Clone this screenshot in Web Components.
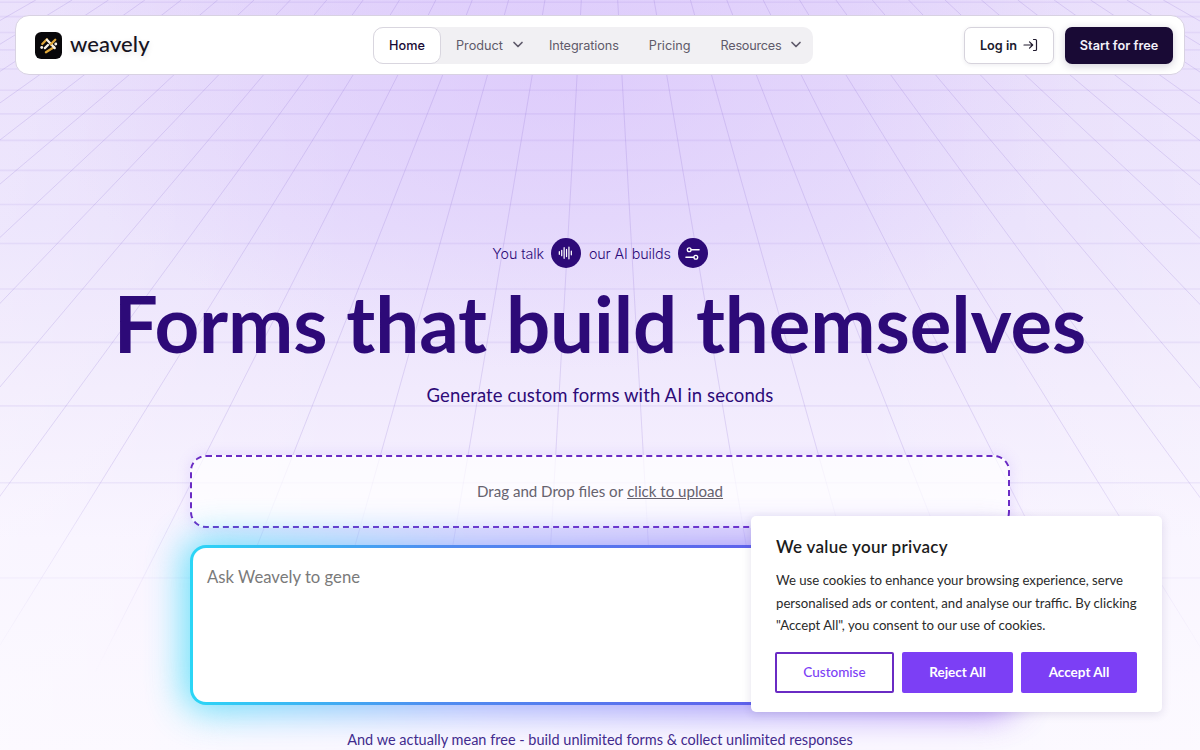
<!DOCTYPE html>
<html lang="en">
<head>
<meta charset="utf-8">
<title>Weavely</title>
<style>
  html, body { margin: 0; height: 750px; overflow: hidden; }
  body { font-family: "Lato", "Liberation Sans", sans-serif; background: #fbf8ff; }
</style>
</head>
<body>
<grid-bg></grid-bg>
<landing-page>
  <site-nav></site-nav>
  <hero-block></hero-block>
</landing-page>
<cookie-card></cookie-card>

<script>
function shadow(el, html) {
  el.attachShadow({ mode: "open" }).innerHTML = html;
}

// perspective floor behind everything
class GridBg extends HTMLElement {
  connectedCallback() {
    const vy = -323;
    const spread = 0.1126;
    let lines = "";
    for (let k = -16; k < 16; k++) {
      const x = (y) => 599.5 + (k + 0.5) * spread * (y + 323);
      lines += `<line x1="${x(0)}" y1="0" x2="${x(750)}" y2="750" />`;
    }
    let rows = "";
    for (let n = -5; n < 12; n++) {
      const y = 1 / (0.00242 - 0.000131 * n) + vy;
      rows += `<line x1="0" y1="${y}" x2="1200" y2="${y}" />`;
    }
    shadow(this, `<style>
        :host {
          position: absolute;
          inset: 0;
          background:
            radial-gradient(ellipse 520px 300px at 560px 70px, rgba(216,194,252,.6), rgba(216,194,252,0)),
            linear-gradient(90deg, rgba(255,255,255,.22), rgba(255,255,255,0) 30%, rgba(255,255,255,0) 70%, rgba(255,255,255,.22)),
            linear-gradient(180deg, #e6dafb 0%, #e9e0fc 30%, #f1eafd 52%, #f8f3ff 72%, #fbf8ff 100%);
        }
        svg {
          display: block;
          -webkit-mask-image: linear-gradient(#000 62%, rgba(0,0,0,.45) 76%, transparent 90%);
          mask-image: linear-gradient(#000 62%, rgba(0,0,0,.45) 76%, transparent 90%);
        }
        .v { stroke: rgba(126, 98, 205, .19); stroke-width: 1; }
        .h { stroke: rgba(140, 110, 215, .1); stroke-width: 1.6; }
      </style>
      <svg width="1200" height="750" viewBox="0 0 1200 750">
        <g class="v">${lines}</g>
        <g class="h">${rows}</g>
      </svg>`);
  }
}

class LandingPage extends HTMLElement {
  connectedCallback() {
    shadow(this, `<style>
        :host {
          position: relative;
          display: flex;
          flex-direction: column;
          padding: 15px 15px 0;
          height: 750px;
          box-sizing: border-box;
        }
      </style><slot></slot>`);
  }
}

class SiteNav extends HTMLElement {
  connectedCallback() {
    const chevron = `<svg width="12" height="8" viewBox="0 0 12 8" fill="none" stroke="currentColor" stroke-width="1.7" stroke-linecap="round" stroke-linejoin="round"><path d="M2 1.500 6 5.500l4-4"/></svg>`;
    shadow(this, `<style>
        :host {
          flex: none;
          display: grid;
          grid-template-columns: 338px 440px 1fr;
          align-items: center;
          height: 60px;
          box-sizing: border-box;
          padding: 0 11px 0 19px;
          background: #fff;
          border: 1px solid #d8d2e2;
          border-radius: 14px;
          font-family: "Inter", sans-serif;
          font-size: 12.700px;
        }
        .logo { display: flex; align-items: center; gap: 8px; }
        .logo span {
          font-family: "Lato", sans-serif;
          font-size: 22px;
          font-weight: 500;
          letter-spacing: .1px;
          color: #17131f;
          text-shadow: 0 2px 6px rgba(0,0,0,.12);
          margin-top: -3px;
        }
        .tabs {
          display: flex;
          align-items: center;
          height: 37px;
          background: #f1f0f3;
          border-radius: 10px;
          color: #5f5a6a;
        }
        .tabs > * { display: flex; align-items: center; }
        .home {
          height: 100%;
          width: 68px;
          box-sizing: border-box;
          justify-content: center;
          background: #fff;
          border: 1px solid #d9d6df;
          border-radius: 10px;
          color: #190a35;
          font-weight: 500;
        }
        .product { margin-left: 15px; gap: 9px; }
        .integrations { margin-left: 25px; letter-spacing: -.1px; }
        .pricing { margin-left: 30px; }
        .resources { margin-left: 30px; gap: 9px; letter-spacing: -.25px; }
        .actions { display: flex; justify-content: flex-end; gap: 11px; }
        .login, .start {
          display: flex;
          align-items: center;
          justify-content: center;
          height: 37px;
          box-sizing: border-box;
          border-radius: 7px;
          font-weight: 600;
        }
        .login {
          width: 90px;
          gap: 6px;
          background: #fff;
          border: 1px solid #d6d3dc;
          color: #201a2e;
          box-shadow: 0 1px 4px rgba(30,10,60,.08);
        }
        .start {
          width: 108px;
          background: #190a35;
          color: #f4f1fa;
          box-shadow: 0 2px 8px rgba(25,10,53,.2);
        }
      </style>
      <div class="logo">
        <svg width="27" height="27" viewBox="0 0 26 26">
          <rect width="26" height="26" rx="6" fill="#08070a"/>
          <g fill="none" stroke-width="2.200" stroke-linecap="round">
            <path stroke="#e0a93b" d="M7 11.500 11.500 7M10.500 19.500l8-5"/>
            <path stroke="#f6f1e6" d="M11.500 7.500 19 15.500M12.500 12.500l-3 3"/>
            <path stroke="#e0a93b" d="M15 12l4.500-4.500"/>
          </g>
          <circle cx="6.500" cy="15" r="1.400" fill="#f6f1e6"/>
          <circle cx="20" cy="11.500" r="1.400" fill="#f6f1e6"/>
        </svg>
        <span>weavely</span>
      </div>
      <div class="tabs">
        <div class="home">Home</div>
        <div class="product">Product ${chevron}</div>
        <div class="integrations">Integrations</div>
        <div class="pricing">Pricing</div>
        <div class="resources">Resources ${chevron}</div>
      </div>
      <div class="actions">
        <div class="login">Log in
          <svg width="15" height="14" viewBox="0 0 15 14" fill="none" stroke="currentColor" stroke-width="1.2" stroke-linecap="round" stroke-linejoin="round"><path d="M1 7h8.500M6.500 3.800 9.700 7l-3.200 3.200M10.500 1.500h2a1 1 0 0 1 1 1v9a1 1 0 0 1-1 1h-2"/></svg>
        </div>
        <div class="start">Start for free</div>
      </div>`);
  }
}

class HeroBlock extends HTMLElement {
  connectedCallback() {
    const wave = `<svg width="16" height="16" viewBox="0 0 18 18" fill="none" stroke="#fff" stroke-width="1.400" stroke-linecap="round"><path d="M1.500 7.500v3M4.200 6v6M6.900 3v12M9.600 5v8M12.300 2.500v13M15 7v4"/></svg>`;
    const sliders = `<svg width="17" height="17" viewBox="0 0 18 18" fill="none" stroke="#fff" stroke-width="1.400" stroke-linecap="round"><circle cx="5.500" cy="5" r="2"/><path d="M7.500 5H16"/><circle cx="12.500" cy="13" r="2"/><path d="M10.500 13H2"/></svg>`;
    shadow(this, `<style>
        :host {
          flex: none;
          display: flex;
          flex-direction: column;
          align-items: center;
          padding-top: 163px;
          color: #2d0a78;
        }
        .tag {
          display: flex;
          align-items: center;
          gap: 7px;
          height: 30px;
          font-family: "Inter", sans-serif;
          font-size: 14.300px;
          font-weight: 300;
          letter-spacing: -.1px;
        }
        .tag i {
          display: flex;
          align-items: center;
          justify-content: center;
          width: 30px;
          height: 30px;
          border-radius: 50%;
          background: #2d0a78;
        }
        .tag i + span { margin-left: 1px; }
        h1 {
          margin: 5px 0 3px;
          font-family: "Lato", sans-serif;
          font-size: 78px;
          line-height: 100px;
          font-weight: 700;
          letter-spacing: -.1px;
          white-space: nowrap;
        }
        .sub {
          margin-top: 7px;
          font-family: "Lato", sans-serif;
          font-size: 18.500px;
          line-height: 24px;
          font-weight: 400;
          letter-spacing: .1px;
        }
        drop-zone { margin-top: 48px; }
        prompt-box { margin-top: 17px; }
        .free {
          margin-top: 24px;
          font-family: "Lato", sans-serif;
          font-size: 14.500px;
          line-height: 22px;
          color: #41288a;
          white-space: nowrap;
        }
      </style>
      <div class="tag"><span>You talk</span><i>${wave}</i><span>our AI builds</span><i>${sliders}</i></div>
      <h1>Forms that build themselves</h1>
      <div class="sub">Generate custom forms with AI in seconds</div>
      <drop-zone></drop-zone>
      <prompt-box></prompt-box>
      <div class="free">And we actually mean free - build unlimited forms &amp; collect unlimited responses</div>`);
  }
}

class DropZone extends HTMLElement {
  connectedCallback() {
    shadow(this, `<style>
        :host {
          display: flex;
          align-items: center;
          justify-content: center;
          width: 820px;
          height: 73px;
          box-sizing: border-box;
          padding-bottom: 2px;
          border: 2px dashed #6a2bc4;
          border-radius: 16px;
          background: rgba(255,255,255,.72);
          box-shadow: 0 0 14px rgba(150,110,250,.18);
          font-family: "Lato", sans-serif;
          font-size: 15.100px;
          color: #66626e;
        }
        u { margin-left: 4px; }
      </style>
      Drag and Drop files or <u>click to upload</u>`);
  }
}

class PromptBox extends HTMLElement {
  connectedCallback() {
    shadow(this, `<style>
        :host {
          position: relative;
          display: block;
          width: 820px;
          height: 160px;
        }
        .glow {
          position: absolute;
          inset: -7px;
          border-radius: 24px;
          background: linear-gradient(90deg, #22dcf8 0%, #6e8bfb 35%, #7c3cf0 100%);
          filter: blur(18px);
          opacity: .68;
        }
        .box {
          position: absolute;
          inset: 0;
          box-sizing: border-box;
          padding: 17px 14px;
          border: 3px solid transparent;
          border-radius: 16px;
          background:
            linear-gradient(#fff, #fff) padding-box,
            linear-gradient(90deg, #2bd6f6 0%, #4f8df0 30%, #6a3de8 100%) border-box;
          font-family: "Lato", sans-serif;
          font-size: 16.700px;
          line-height: 24px;
          color: #7a7a7a;
        }
      </style>
      <div class="glow"></div>
      <div class="box">Ask Weavely to gene</div>`);
  }
}

class CookieCard extends HTMLElement {
  connectedCallback() {
    shadow(this, `<style>
        :host {
          position: absolute;
          left: 751px;
          top: 516px;
          width: 411px;
          height: 196px;
          box-sizing: border-box;
          padding: 20px 24px 0;
          background: #fff;
          border-radius: 5px;
          box-shadow: 0 2px 10px rgba(60,40,110,.14);
          font-family: "Lato", sans-serif;
          color: #2a2a2a;
        }
        h2 {
          margin: 0 0 0 1px;
          font-size: 17px;
          line-height: 22px;
          font-weight: 600;
          letter-spacing: .3px;
          color: #1c1c1c;
        }
        p {
          margin: 11px 0 0 1px;
          font-size: 13.200px;
          line-height: 22.500px;
          white-space: nowrap;
        }
        .btns { display: flex; gap: 8px; margin-top: 15px; }
        .btns div {
          display: flex;
          align-items: center;
          justify-content: center;
          height: 41px;
          box-sizing: border-box;
          border-radius: 2px;
          font-size: 13.500px;
          font-weight: 700;
          color: #fff;
          background: #7c3ff5;
        }
        .btns .ghost {
          width: 119px;
          background: #fff;
          border: 2px solid #6a2bc4;
          color: #7c3ff5;
          font-weight: 500;
        }
        .reject { width: 111px; }
        .accept { width: 116px; }
      </style>
      <h2>We value your privacy</h2>
      <p>We use cookies to enhance your browsing experience, serve<br>personalised ads or content, and analyse our traffic. By clicking<br>"Accept All", you consent to our use of cookies.</p>
      <div class="btns">
        <div class="ghost">Customise</div>
        <div class="reject">Reject All</div>
        <div class="accept">Accept All</div>
      </div>`);
  }
}

customElements.define("grid-bg", GridBg);
customElements.define("landing-page", LandingPage);
customElements.define("site-nav", SiteNav);
customElements.define("hero-block", HeroBlock);
customElements.define("drop-zone", DropZone);
customElements.define("prompt-box", PromptBox);
customElements.define("cookie-card", CookieCard);
</script>
</body>
</html>
